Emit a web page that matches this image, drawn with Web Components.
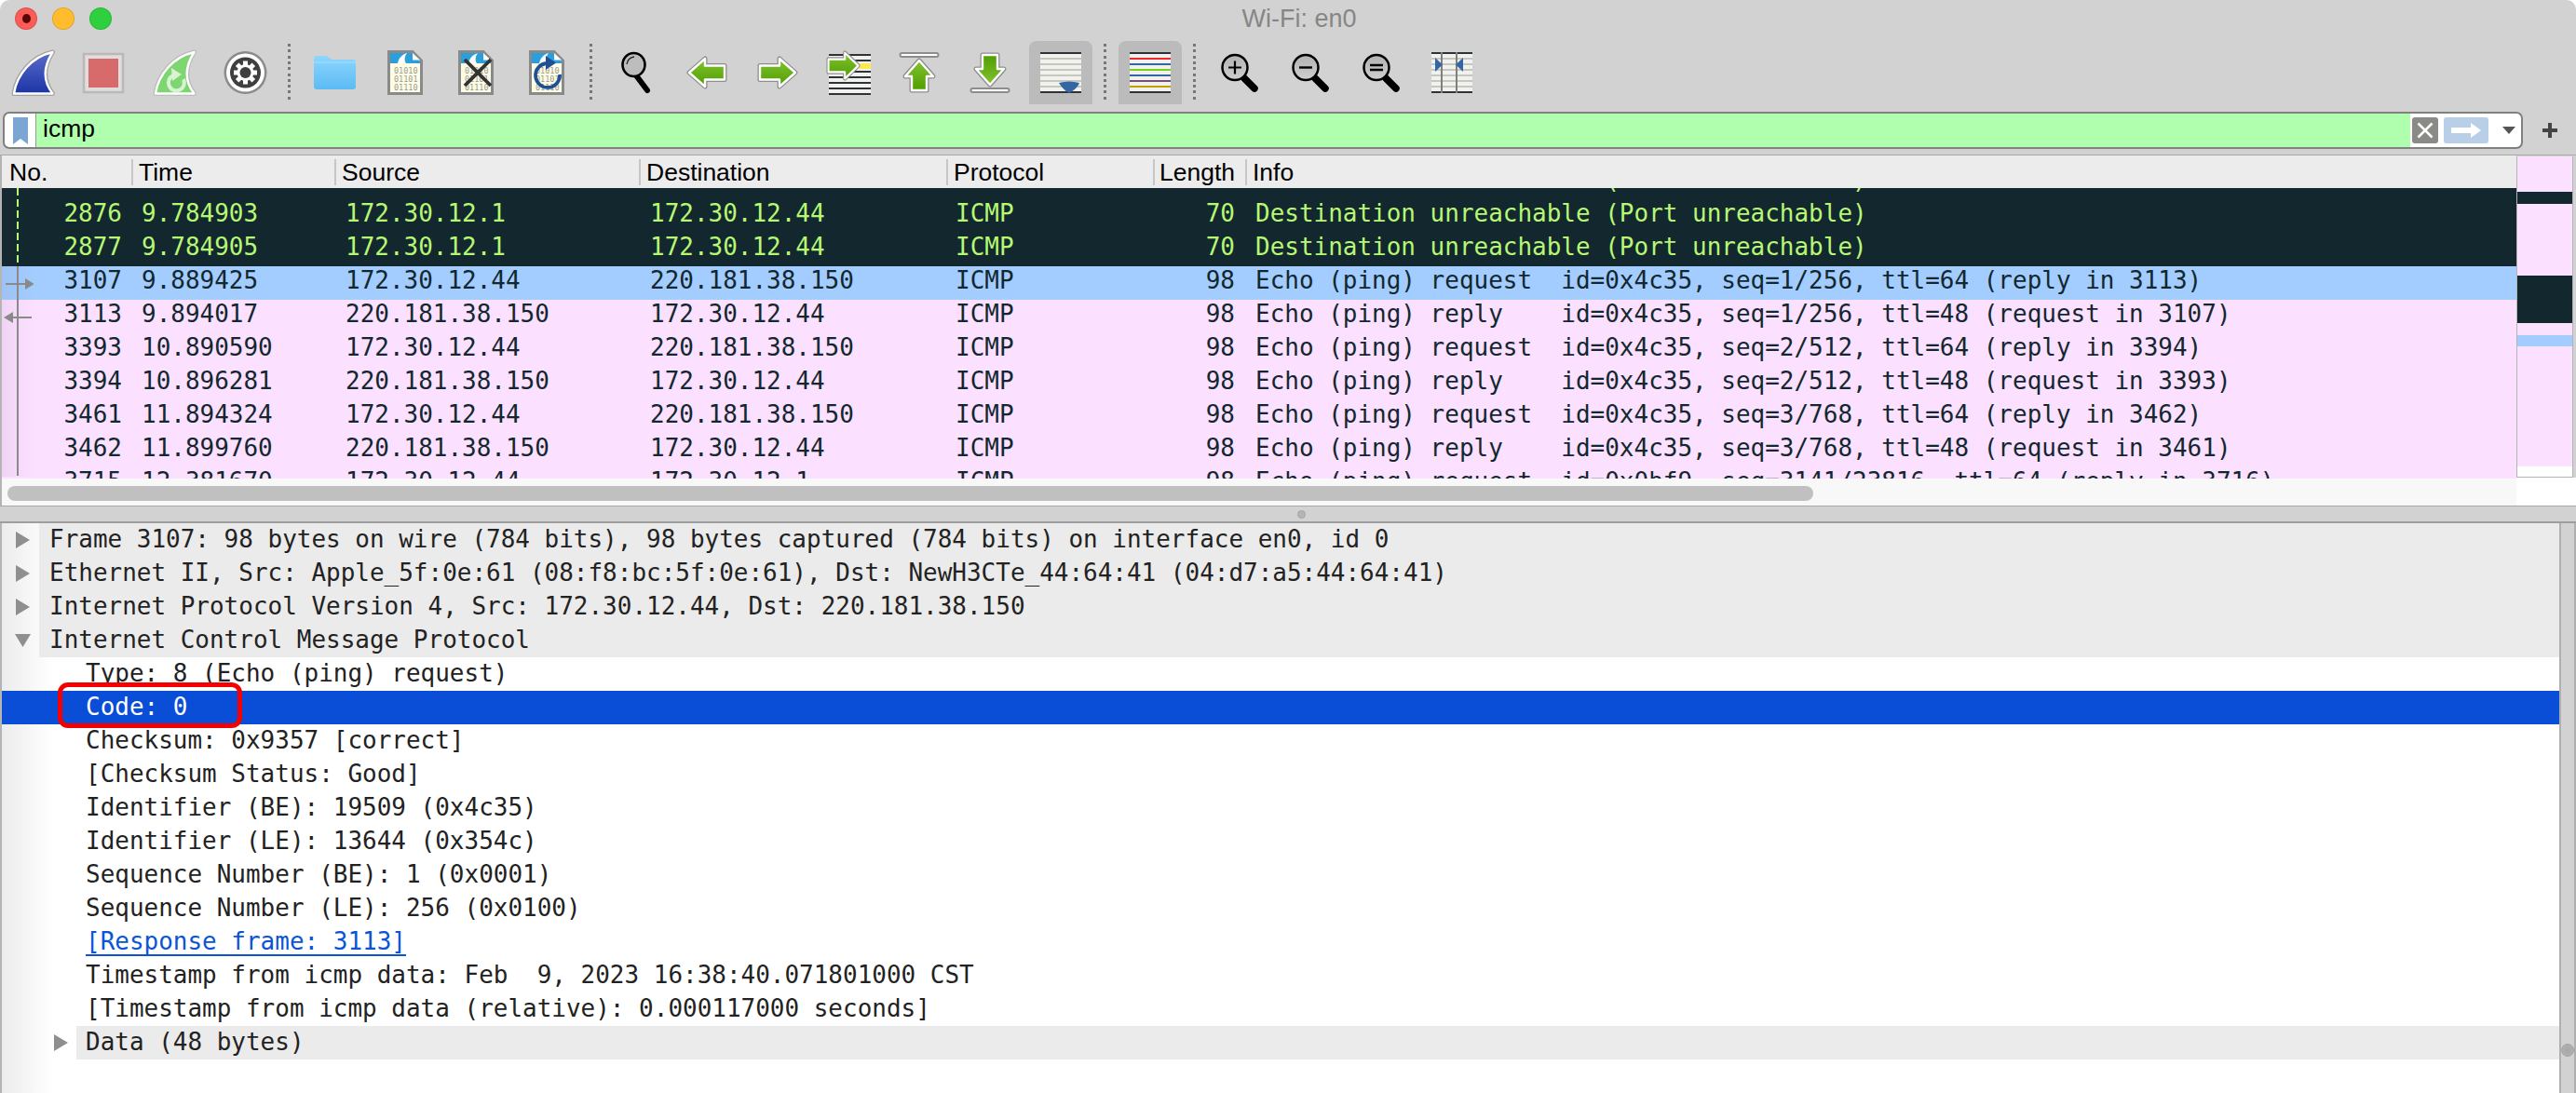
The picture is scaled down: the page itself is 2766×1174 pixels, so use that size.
<!DOCTYPE html>
<html>
<head>
<meta charset="utf-8">
<title>Wi-Fi: en0</title>
<style>
  html { background: #fff; }
  body { margin: 0; width: 2766px; height: 1174px; overflow: hidden; background: #d2d2d2; border-radius: 10px 10px 0 0; display: flex; flex-direction: column; }
</style>
</head>
<body>
<ws-titlebar caption="Wi-Fi: en0"></ws-titlebar>

<ws-toolbar>
  <ws-tool icon="fin"></ws-tool>
  <ws-tool icon="stop"></ws-tool>
  <ws-tool icon="restart"></ws-tool>
  <ws-tool icon="gear"></ws-tool>
  <ws-sep></ws-sep>
  <ws-tool icon="folder"></ws-tool>
  <ws-tool icon="file"></ws-tool>
  <ws-tool icon="fileclose"></ws-tool>
  <ws-tool icon="filereload"></ws-tool>
  <ws-sep></ws-sep>
  <ws-tool icon="search"></ws-tool>
  <ws-tool icon="back"></ws-tool>
  <ws-tool icon="forward"></ws-tool>
  <ws-tool icon="goto"></ws-tool>
  <ws-tool icon="first"></ws-tool>
  <ws-tool icon="last"></ws-tool>
  <ws-tool icon="autoscroll" checked></ws-tool>
  <ws-sep></ws-sep>
  <ws-tool icon="colorize" checked></ws-tool>
  <ws-sep></ws-sep>
  <ws-tool icon="zoomin"></ws-tool>
  <ws-tool icon="zoomout"></ws-tool>
  <ws-tool icon="zoomreset"></ws-tool>
  <ws-tool icon="resize"></ws-tool>
</ws-toolbar>

<ws-filter>icmp</ws-filter>

<ws-packet-list>
  <ws-packet-row kind="error" no="2875" time="9.784901" src="172.30.12.1" dst="172.30.12.44" proto="ICMP" len="70" info="Destination unreachable (Port unreachable)"></ws-packet-row>
  <ws-packet-row kind="error" no="2876" time="9.784903" src="172.30.12.1" dst="172.30.12.44" proto="ICMP" len="70" info="Destination unreachable (Port unreachable)"></ws-packet-row>
  <ws-packet-row kind="error" no="2877" time="9.784905" src="172.30.12.1" dst="172.30.12.44" proto="ICMP" len="70" info="Destination unreachable (Port unreachable)"></ws-packet-row>
  <ws-packet-row kind="selected" no="3107" time="9.889425" src="172.30.12.44" dst="220.181.38.150" proto="ICMP" len="98" info="Echo (ping) request  id=0x4c35, seq=1/256, ttl=64 (reply in 3113)"></ws-packet-row>
  <ws-packet-row no="3113" time="9.894017" src="220.181.38.150" dst="172.30.12.44" proto="ICMP" len="98" info="Echo (ping) reply    id=0x4c35, seq=1/256, ttl=48 (request in 3107)"></ws-packet-row>
  <ws-packet-row no="3393" time="10.890590" src="172.30.12.44" dst="220.181.38.150" proto="ICMP" len="98" info="Echo (ping) request  id=0x4c35, seq=2/512, ttl=64 (reply in 3394)"></ws-packet-row>
  <ws-packet-row no="3394" time="10.896281" src="220.181.38.150" dst="172.30.12.44" proto="ICMP" len="98" info="Echo (ping) reply    id=0x4c35, seq=2/512, ttl=48 (request in 3393)"></ws-packet-row>
  <ws-packet-row no="3461" time="11.894324" src="172.30.12.44" dst="220.181.38.150" proto="ICMP" len="98" info="Echo (ping) request  id=0x4c35, seq=3/768, ttl=64 (reply in 3462)"></ws-packet-row>
  <ws-packet-row no="3462" time="11.899760" src="220.181.38.150" dst="172.30.12.44" proto="ICMP" len="98" info="Echo (ping) reply    id=0x4c35, seq=3/768, ttl=48 (request in 3461)"></ws-packet-row>
  <ws-packet-row no="3715" time="12.381670" src="172.30.12.44" dst="172.30.12.1" proto="ICMP" len="98" info="Echo (ping) request  id=0x0bf9, seq=3141/23816, ttl=64 (reply in 3716)"></ws-packet-row>
</ws-packet-list>

<ws-splitter></ws-splitter>

<ws-details>
  <ws-tree-row expander="closed">Frame 3107: 98 bytes on wire (784 bits), 98 bytes captured (784 bits) on interface en0, id 0</ws-tree-row>
  <ws-tree-row expander="closed">Ethernet II, Src: Apple_5f:0e:61 (08:f8:bc:5f:0e:61), Dst: NewH3CTe_44:64:41 (04:d7:a5:44:64:41)</ws-tree-row>
  <ws-tree-row expander="closed">Internet Protocol Version 4, Src: 172.30.12.44, Dst: 220.181.38.150</ws-tree-row>
  <ws-tree-row expander="open">Internet Control Message Protocol</ws-tree-row>
  <ws-tree-row level="1">Type: 8 (Echo (ping) request)</ws-tree-row>
  <ws-tree-row level="1" selected>Code: 0</ws-tree-row>
  <ws-tree-row level="1">Checksum: 0x9357 [correct]</ws-tree-row>
  <ws-tree-row level="1">[Checksum Status: Good]</ws-tree-row>
  <ws-tree-row level="1">Identifier (BE): 19509 (0x4c35)</ws-tree-row>
  <ws-tree-row level="1">Identifier (LE): 13644 (0x354c)</ws-tree-row>
  <ws-tree-row level="1">Sequence Number (BE): 1 (0x0001)</ws-tree-row>
  <ws-tree-row level="1">Sequence Number (LE): 256 (0x0100)</ws-tree-row>
  <ws-tree-row level="1" link>[Response frame: 3113]</ws-tree-row>
  <ws-tree-row level="1">Timestamp from icmp data: Feb  9, 2023 16:38:40.071801000 CST</ws-tree-row>
  <ws-tree-row level="1">[Timestamp from icmp data (relative): 0.000117000 seconds]</ws-tree-row>
  <ws-tree-row level="1" expander="closed">Data (48 bytes)</ws-tree-row>
  <ws-callout></ws-callout>
</ws-details>

<script>
const GREY = "#8d8d8d";
const PINK = "#fbe0ff";
const MONO = '"DejaVu Sans Mono", monospace';
const SANS = '"Liberation Sans", Arial, sans-serif';

// grey outline, white inner line, coloured fill: the look of all the green arrows and fins
function outlined(d, fill, outer = GREY) {
  return `<path d="${d}" fill="none" stroke="${outer}" stroke-width="5" stroke-linejoin="round"/>
    <path d="${d}" fill="${fill}" stroke="#fff" stroke-width="2.4" stroke-linejoin="round"/>`;
}

function grad(id, top, bottom) {
  return `<defs><linearGradient id="${id}" x1="0" y1="0" x2="0" y2="1"><stop offset="0" stop-color="${top}"/><stop offset="1" stop-color="${bottom}"/></linearGradient></defs>`;
}

function stripes(x, y, w, h, line, step = 6) {
  let out = `<rect x="${x}" y="${y}" width="${w}" height="${h}" fill="#f1f1ee"/>`;
  for (let i = y; i < y + h - 1; i += step) {
    out += `<rect x="${x}" y="${i}" width="${w}" height="2" fill="${line}"/>`;
  }
  return out;
}

function fileIcon(extra) {
  return `<path d="M1.5 1.5H27L36.5 11V46.5H1.5Z" fill="#fdfce6" stroke="#8a8a8a" stroke-width="3" stroke-linejoin="miter"/>
    <path d="M3 3H26.5L35 11.5V14H3Z" fill="#2a9fdc"/>
    <path d="M11 14C12 9 15 5 21 3C18 7 18 11 20 14Z" fill="#fff"/>
    <path d="M27 3V10.500H35Z" fill="#fff"/>
    <g font-family='${MONO}' font-size="8.5" fill="#9c9c8c"><text x="7" y="24.500">01010</text><text x="7" y="33.500">01101</text><text x="7" y="42.500">01110</text></g>
    ${extra}`;
}

function lens(sign) {
  return `${grad("l", "#b2b2b2", "#cfcfcf")}
    <path d="M25 26L36 37" stroke="#000" stroke-width="7.5" stroke-linecap="round"/>
    <circle cx="15" cy="14.500" r="13.500" fill="url(#l)" stroke="#000" stroke-width="2.5"/>${sign}`;
}

const GEAR_TEETH = [0, 45, 90, 135, 180, 225, 270, 315]
  .map(a => `<rect x="21" y="11.500" width="5" height="6" fill="#fff" transform="rotate(${a} 23.500 24)"/>`).join("");

const FIN = "M2 46.500C5 26 21 7 43.500 2C34 17 32 32 43.500 46.500Z";
const ARROW_L = "M3 18L20 3V10.500H41V25.500H20V33Z";
const ARROW_U = "M22 9L37 26H30V41H14V26H7Z";
const GREEN = grad("g", "#83c232", "#4f9e00");

const ICONS = {
  fin: [45, 48, `${grad("b", "#5a6cc9", "#1c34a6")}${outlined(FIN, "url(#b)", "#a2a2a2")}`],
  stop: [44, 43, `<rect x="1" y="1" width="42" height="41" fill="#e2dddd" stroke="#b9b9b9" stroke-width="2.500"/><rect x="6" y="6" width="32" height="31" fill="#d76a6a"/>`],
  restart: [45, 48, `${outlined(FIN, "#7dd670", "#bcbcbc")}
    <path d="M32 31A8.500 8.500 0 1 1 21 27" fill="none" stroke="#d9f2d4" stroke-width="4"/><path d="M19 19L30 26L20 33Z" fill="#d9f2d4"/>`],
  gear: [47, 48, `<circle cx="23.500" cy="24" r="23" fill="#8b8b8b"/><circle cx="23.500" cy="24" r="20.500" fill="#fff"/><circle cx="23.500" cy="24" r="16.500" fill="#3f3f3f"/>
    ${GEAR_TEETH}<circle cx="23.500" cy="24" r="9" fill="#fff"/><circle cx="23.500" cy="24" r="6" fill="#3f3f3f"/>`],
  folder: [45, 38, `${grad("f", "#8dd6fe", "#5cbbf4")}<path d="M0 5Q0 1 3 1H13Q15 1 17 3.500L19 5H42Q45 5 45 8V34Q45 37 42 37H3Q0 37 0 34Z" fill="url(#f)"/><path d="M0 8H45" stroke="#a6e0ff" stroke-width="1"/>`],
  file: [38, 48, fileIcon("")],
  fileclose: [38, 48, fileIcon(`<path d="M7 10L35 38M35 10L7 38" stroke="#333" stroke-width="3.800"/>`)],
  filereload: [38, 48, fileIcon(`<path d="M33 26A13 13 0 1 1 19 14" fill="none" stroke="#1f4f95" stroke-width="3.800"/><path d="M18 6L29 13.500L18 21Z" fill="#1f4f95"/>`)],
  search: [32, 44, `<path d="M16 25L28 41" stroke="#000" stroke-width="6" stroke-linecap="round"/><ellipse cx="13.500" cy="13.500" rx="12" ry="12.500" fill="#bdbdbd" stroke="#000" stroke-width="2.600"/><path d="M6 13Q7 6 14 5" fill="none" stroke="#222" stroke-width="1.300"/>`],
  back: [44, 36, `${GREEN}${outlined(ARROW_L, "url(#g)")}`],
  forward: [44, 36, `${GREEN}<g transform="translate(44 0) scale(-1 1)">${outlined(ARROW_L, "url(#g)")}</g>`],
  goto: [48, 48, `${stripes(3, 4, 45, 44, "#2e3436")}<rect x="36" y="14" width="12" height="6" fill="#fce94f"/>${GREEN}
    <g transform="translate(37 0) scale(-1 1) scale(.84 .92)">${outlined(ARROW_L, "url(#g)")}</g>`],
  first: [44, 44, `<rect x="1.500" y="1" width="41" height="4" rx="2" fill="#fff" stroke="${GREY}" stroke-width="2"/>${GREEN}${outlined(ARROW_U, "url(#g)")}`],
  last: [44, 44, `<rect x="1.500" y="39" width="41" height="4" rx="2" fill="#fff" stroke="${GREY}" stroke-width="2"/>${GREEN}<g transform="translate(0 44) scale(1 -1)">${outlined(ARROW_U, "url(#g)")}</g>`],
  autoscroll: [44, 44, `${stripes(0, 0, 44, 44, "#c6c8bf")}<rect width="44" height="2" fill="#2e3436"/><rect y="42" width="44" height="2" fill="#2e3436"/>
    <path d="M20 33Q31 30 42 33Q40 39 31 44Q24 40 20 33Z" fill="#3465a4"/>`],
  colorize: [44, 44, `<rect width="44" height="44" fill="#f1f1ee"/><rect width="44" height="2" fill="#2e3436"/><rect y="6" width="44" height="2" fill="#ef2929"/><rect y="12" width="44" height="2" fill="#3465a4"/><rect y="18" width="44" height="2" fill="#73d216"/><rect y="24" width="44" height="2" fill="#3465a4"/><rect y="30" width="44" height="2" fill="#75507b"/><rect y="36" width="44" height="2" fill="#c4a000"/><rect y="42" width="44" height="2" fill="#2e3436"/>`],
  zoomin: [41, 41, lens(`<path d="M15 7.500V21.500M8 14.500H22" stroke="#000" stroke-width="2.200"/>`)],
  zoomout: [41, 41, lens(`<path d="M8 14.500H22" stroke="#000" stroke-width="2.400"/>`)],
  zoomreset: [41, 41, lens(`<path d="M8 12H22M8 17H22" stroke="#000" stroke-width="2.400"/>`)],
  resize: [44, 44, `${stripes(0, 0, 44, 44, "#c6c8bf")}<rect width="44" height="2" fill="#2e3436"/><rect y="42" width="44" height="2" fill="#2e3436"/>
    <rect x="10" width="2" height="44" fill="#7f7f7f"/><rect x="26" width="2" height="44" fill="#7f7f7f"/>
    <path d="M4 6L12 13.500L4 21Z" fill="#3465a4"/><path d="M34 6L26 13.500L34 21Z" fill="#3465a4"/>`],
};

class WsTitlebar extends HTMLElement {
  constructor() {
    super();
    this.root = this.attachShadow({ mode: "open" });
  }

  connectedCallback() {
    this.root.innerHTML = `<style>
      :host { display: flex; align-items: center; height: 44px; flex: none; position: relative; padding: 0 0 4px 16px; box-sizing: border-box; }
      .lights { display: flex; gap: 16px; }
      .lights i { width: 24px; height: 24px; border-radius: 50%; box-sizing: border-box; border: 1px solid rgba(0,0,0,.12); display: flex; align-items: center; justify-content: center; }
      .r { background: #fc5b57; } .y { background: #ffbd2e; } .g { background: #2fd03f; }
      .r::after { content: ""; width: 9px; height: 10px; border-radius: 50%; background: #5c0608; }
      .title { flex: 1; text-align: center; padding-right: 96px; font: 27px ${SANS}; color: #868686; }
    </style>
    <div class="lights"><i class="r"></i><i class="y"></i><i class="g"></i></div>
    <div class="title">${this.getAttribute("caption")}</div>`;
  }
}

class WsToolbar extends HTMLElement {
  constructor() {
    super();
    this.root = this.attachShadow({ mode: "open" });
    this.root.innerHTML = `<style>
      :host { display: flex; align-items: stretch; flex: none; height: 68px; margin: 0 0 8px -3px; }
    </style><slot></slot>`;
  }
}

class WsTool extends HTMLElement {
  constructor() {
    super();
    this.root = this.attachShadow({ mode: "open" });
  }

  connectedCallback() {
    const [w, h, body] = ICONS[this.getAttribute("icon")];
    this.root.innerHTML = `<style>
      :host { display: flex; align-items: center; justify-content: center; width: 76px; height: 68px; flex: none; }
      .btn { width: 68px; height: 68px; display: flex; align-items: center; justify-content: center; border-radius: 8px 8px 0 0; }
      :host([checked]) .btn { background: #bbbbbb; }
      svg { display: block; overflow: visible; }
    </style>
    <div class="btn"><svg width="${w}" height="${h}" viewBox="0 0 ${w} ${h}">${body}</svg></div>`;
  }
}

class WsSep extends HTMLElement {
  constructor() {
    super();
    this.root = this.attachShadow({ mode: "open" });
    this.root.innerHTML = `<style>
      :host { display: flex; justify-content: center; align-items: center; width: 20px; flex: none; }
      i { width: 3px; height: 62px; margin-right: 2px; background: repeating-linear-gradient(180deg, #777 0 3px, transparent 3px 6.3px); }
    </style><i></i>`;
  }
}

class WsFilter extends HTMLElement {
  constructor() {
    super();
    this.root = this.attachShadow({ mode: "open" });
    this.root.innerHTML = `<style>
      :host { display: flex; align-items: center; height: 40px; flex: none; padding-left: 3px; margin-bottom: 6px; }
      .box { flex: 1; height: 40px; box-sizing: border-box; display: flex; border: 2px solid #808080; border-radius: 7px; overflow: hidden; background: #fff; }
      .mark { width: 33px; flex: none; display: flex; align-items: center; justify-content: center; border-right: 1px solid #9a9a9a; }
      .text { flex: 1; background: #afffaf; padding: 0 0 4px 7px; font: 26.500px/32px ${SANS}; color: #000; }
      .end { width: 119px; flex: none; display: flex; align-items: center; padding-left: 2px; box-sizing: border-box; }
      .clear { width: 28px; height: 28px; border-radius: 3px; background: #8a8a86; display: flex; align-items: center; justify-content: center; }
      .go { width: 48px; height: 28px; border-radius: 3px; background: #b9cfe8; margin-left: 6px; display: flex; align-items: center; justify-content: center; }
      .drop { margin-left: 15px; }
      .plus { width: 57px; flex: none; display: flex; justify-content: center; }
    </style>
    <div class="box">
      <div class="mark"><svg width="16" height="29" viewBox="0 0 16 29"><path d="M0 0H16V29L8 23L0 29Z" fill="#7ba6d4"/></svg></div>
      <div class="text"><slot></slot></div>
      <div class="end">
        <div class="clear"><svg width="18" height="18" viewBox="0 0 18 18"><path d="M1.500 1.500L16.500 16.500M16.500 1.500L1.500 16.500" stroke="#fff" stroke-width="2.500"/></svg></div>
        <div class="go"><svg width="32" height="16" viewBox="0 0 32 16"><path d="M0 5H21V0L32 8L21 16V11H0Z" fill="#fff"/></svg></div>
        <svg class="drop" width="14" height="8" viewBox="0 0 14 8"><path d="M0 0H14L7 8Z" fill="#555"/></svg>
      </div>
    </div>
    <div class="plus"><svg width="16" height="16" viewBox="0 0 16 16"><path d="M8 0V16M0 8H16" stroke="#444" stroke-width="4"/></svg></div>`;
  }
}

class WsPacketList extends HTMLElement {
  constructor() {
    super();
    this.root = this.attachShadow({ mode: "open" });
    const heads = ["No.", "Time", "Source", "Destination", "Protocol", "Length", "Info"];
    this.root.innerHTML = `<style>
      :host { display: flex; flex: none; height: 378px; box-sizing: border-box; border-top: 1px solid #a8a8a8; border-bottom: 1px solid #a8a8a8; --cols: 139px 218px 327px 330px 222px 99px 1fr; }
      .left { width: 2702px; flex: none; box-sizing: border-box; border-left: 2px solid #b4b4b4; display: flex; flex-direction: column; }
      .head { display: grid; grid-template-columns: var(--cols); height: 35px; flex: none; background: #ececec; align-items: center; font: 26.500px/28px ${SANS}; color: #000; }
      .head div { height: 28px; border-left: 2px solid #c6c6c6; padding-left: 6px; white-space: nowrap; overflow: hidden; }
      .head div:first-child { border-left: 0; padding-left: 8px; }
      .head div:nth-child(6) { padding-left: 5px; }
      .rows { height: 312px; flex: none; overflow: hidden; position: relative; background: ${PINK}; }
      .scroller { margin-top: -24px; }
      .gutter { position: absolute; left: 0; top: 0; width: 34px; height: 310px; background: linear-gradient(90deg, rgba(90,60,90,.07), rgba(90,60,90,0)); }
      .track { flex: 1; background: #f8f8f8; padding: 8px 0 0 6px; }
      .thumb { width: 1939px; height: 16px; border-radius: 8px; background: #c0c0c0; }
      .right { flex: 1; display: flex; flex-direction: column; }
      .map { height: 345px; width: 61px; box-sizing: border-box; margin-top: 1px; border: solid #b4b4b4; border-width: 0 1px 1px 1px; background: #fff; display: flex; flex-direction: column; flex: none; }
      .map i { display: block; flex: none; }
      .p { background: ${PINK}; } .d { background: #12272e; } .s { background: #a3ccff; }
      .corner { flex: 1; background: #fff; }
    </style>
    <div class="left">
      <div class="head">${heads.map(h => `<div>${h}</div>`).join("")}</div>
      <div class="rows">
        <div class="scroller"><slot></slot></div>
        <div class="gutter"><svg width="34" height="310" viewBox="0 0 34 310">
          <path d="M17 0V84" stroke="#b7f774" stroke-width="2" stroke-dasharray="8 4"/>
          <path d="M17 84V309" stroke="#8a8a8a" stroke-width="2"/>
          <path d="M4 103H26" stroke="#8a8a8a" stroke-width="2"/><path d="M25 97L35 103L25 109Z" fill="#8a8a8a"/>
          <path d="M12 139H32" stroke="#8a8a8a" stroke-width="2"/><path d="M12 133L2 139L12 145Z" fill="#8a8a8a"/>
        </svg></div>
      </div>
      <div class="track"><div class="thumb"></div></div>
    </div>
    <div class="right">
      <div class="map">
        <i class="p" style="height:38px"></i><i class="d" style="height:13px"></i><i class="p" style="height:77px"></i>
        <i class="d" style="height:51px"></i><i class="p" style="height:13px"></i><i class="s" style="height:12px"></i>
        <i class="p" style="height:129px"></i>
      </div>
      <div class="corner"></div>
    </div>`;
  }
}

class WsPacketRow extends HTMLElement {
  constructor() {
    super();
    this.root = this.attachShadow({ mode: "open" });
  }

  connectedCallback() {
    const a = n => this.getAttribute(n);
    this.root.innerHTML = `<style>
      :host { display: grid; grid-template-columns: var(--cols); height: 36px; background: ${PINK}; color: #12272e; font: 25.970px/30px ${MONO}; white-space: pre; }
      :host([kind="error"]) { background: #12272e; color: #b7f774; }
      :host([kind="selected"]) { background: #a3ccff; }
      div { overflow: hidden; padding-left: 12px; }
      .no { text-align: right; padding: 0 10px 0 0; }
      .time { padding-left: 11px; }
      .proto { padding-left: 10px; }
      .len { text-align: right; padding: 0 11px 0 0; }
      .info { padding-left: 11px; }
    </style>
    <div class="no">${a("no")}</div><div class="time">${a("time")}</div><div>${a("src")}</div><div>${a("dst")}</div>
    <div class="proto">${a("proto")}</div><div class="len">${a("len")}</div><div class="info">${a("info")}</div>`;
  }
}

class WsSplitter extends HTMLElement {
  constructor() {
    super();
    this.root = this.attachShadow({ mode: "open" });
    this.root.innerHTML = `<style>
      :host { display: flex; height: 18px; flex: none; box-sizing: border-box; border-bottom: 2px solid #9e9e9e; align-items: center; justify-content: center; padding-left: 28px; }
      i { width: 9px; height: 9px; border-radius: 50%; background: #b5b5b5; border: 1px solid #a4a4a4; box-sizing: border-box; }
    </style><i></i>`;
  }
}

class WsDetails extends HTMLElement {
  constructor() {
    super();
    this.root = this.attachShadow({ mode: "open" });
    this.root.innerHTML = `<style>
      :host { display: flex; flex: 1; position: relative; background: #fff; min-height: 0; }
      .tree { width: 2748px; flex: none; box-sizing: border-box; border-left: 2px solid #b4b4b4; background: linear-gradient(90deg, #ececec, #fff 56px); }
      .strip { flex: 1; box-sizing: border-box; background: #d2d2d2; border: solid #b0b0b0; border-width: 0 2px; display: flex; justify-content: center; align-items: flex-end; padding-bottom: 39px; }
      .strip i { width: 12px; height: 12px; border-radius: 50%; background: radial-gradient(circle, #a6a6a6, #b6b6b6); border: 0.500px solid #a0a0a0; }
    </style>
    <div class="tree"><slot></slot></div>
    <div class="strip"><i></i></div>`;
  }
}

class WsTreeRow extends HTMLElement {
  constructor() {
    super();
    this.root = this.attachShadow({ mode: "open" });
  }

  connectedCallback() {
    const exp = this.getAttribute("expander");
    const glyph = exp === "open"
      ? `<svg width="17" height="14" viewBox="0 0 17 14"><path d="M0 0H17L8.500 14Z" fill="#8f8f8f"/></svg>`
      : exp === "closed"
        ? `<svg width="15" height="18" viewBox="0 0 15 18"><path d="M0 0L15 9L0 18Z" fill="#8f8f8f"/></svg>`
        : "";
    this.root.innerHTML = `<style>
      :host { display: flex; height: 36px; color: #222; font: 25.970px/34px ${MONO}; white-space: pre; }
      .exp { width: 40px; flex: none; display: flex; align-items: center; justify-content: center; padding-left: 5px; box-sizing: border-box; }
      .label { flex: 1; padding-left: 11px; }
      :host([expander]) .label { background: #ebebeb; }
      :host([level="1"]) .exp { width: 80px; justify-content: flex-end; padding: 0 9px 0 0; }
      :host([level="1"]) .label { padding-left: 10px; }
      :host([selected]) { background: #0a4dd6; color: #fff; }
      :host([link]) { color: #0a55d5; }
      :host([link]) .txt { border-bottom: 2px solid #0a55d5; display: inline-block; height: 31px; }
    </style>
    <div class="exp">${glyph}</div><div class="label"><span class="txt"><slot></slot></span></div>`;
  }
}

class WsCallout extends HTMLElement {
  constructor() {
    super();
    this.root = this.attachShadow({ mode: "open" });
    this.root.innerHTML = `<style>
      :host { position: absolute; left: 62px; top: 171px; width: 198px; height: 49px; box-sizing: border-box; border: 5px solid #f50000; border-radius: 11px; }
    </style>`;
  }
}

customElements.define("ws-titlebar", WsTitlebar);
customElements.define("ws-toolbar", WsToolbar);
customElements.define("ws-tool", WsTool);
customElements.define("ws-sep", WsSep);
customElements.define("ws-filter", WsFilter);
customElements.define("ws-packet-list", WsPacketList);
customElements.define("ws-packet-row", WsPacketRow);
customElements.define("ws-splitter", WsSplitter);
customElements.define("ws-details", WsDetails);
customElements.define("ws-tree-row", WsTreeRow);
customElements.define("ws-callout", WsCallout);
</script>
</body>
</html>
